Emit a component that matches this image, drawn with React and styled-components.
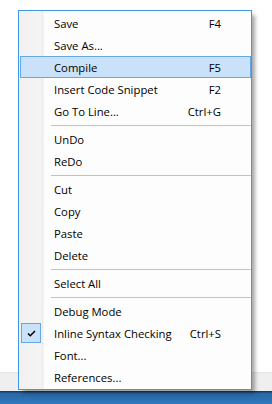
import React from "react";
import styled, { createGlobalStyle } from "styled-components";

const Global = createGlobalStyle`
  html, body { margin: 0; padding: 0; background: #ffffff; }
  body { font-family: "Segoe UI", "Open Sans", "Noto Sans", sans-serif; }
`;

const Desktop = styled.div`
  position: relative;
  width: 272px;
  height: 404px;
  display: flex;
  flex-direction: column;
  overflow: hidden;
`;

const WindowArea = styled.div`
  flex: 1;
  background: #ffffff;
`;

const StatusStrip = styled.div`
  height: 18px;
  background: #efefef;
  border-top: 1px solid #e4e4e4;
`;

const Taskbar = styled.div`
  height: 13px;
  background: linear-gradient(#173d63 0, #173d63 1px, #2667a6 2px, #2f78bb 100%);
`;

const Menu = styled.div`
  position: absolute;
  left: 18px;
  top: 10px;
  width: 232px;
  padding: 1px 0;
  border: 1px solid #3f97e8;
  background: linear-gradient(to right, #f1f1f1 0, #f4f4f4 22px, #ebebeb 24px, #fdfdfd 25px, #fdfdfd 100%);
  box-shadow: 4px 4px 4px -1px rgba(0, 0, 0, 0.35);
  display: flex;
  flex-direction: column;
  font-size: 11.3px;
  color: #000;
`;

const Row = styled.div`
  position: relative;
  height: 22px;
  display: flex;
  align-items: center;
  justify-content: space-between;
  padding: 0 30px 0 35px;
  box-sizing: border-box;
  ${(p) =>
    p.$active &&
    `
    margin: 0 0 0 1px;
    padding-left: 34px;
    background: #c9e2f9;
    box-shadow: inset 0 0 0 1px #66a7e8;
  `}
`;

const Label = styled.span`
  white-space: nowrap;
`;

const Shortcut = styled.span`
  white-space: nowrap;
  text-align: right;
`;

const CheckBox = styled.span`
  position: absolute;
  left: 2px;
  top: 1px;
  width: 18px;
  height: 18px;
  border: 1px solid #66a7e8;
  background: #c9e2f9;
  display: flex;
  align-items: center;
  justify-content: center;
`;

const Separator = styled.div`
  height: 6px;
  display: flex;
  align-items: center;
  padding-left: 32px;
  &::after {
    content: "";
    flex: 1;
    height: 1px;
    background: #c2c2c2;
  }
`;

const groups = [
  [
    { label: "Save", key: "F4" },
    { label: "Save As..." },
    { label: "Compile", key: "F5", active: true },
    { label: "Insert Code Snippet", key: "F2" },
    { label: "Go To Line...", key: "Ctrl+G" },
  ],
  [{ label: "UnDo" }, { label: "ReDo" }],
  [{ label: "Cut" }, { label: "Copy" }, { label: "Paste" }, { label: "Delete" }],
  [{ label: "Select All" }],
  [
    { label: "Debug Mode" },
    { label: "Inline Syntax Checking", key: "Ctrl+S", checked: true },
    { label: "Font..." },
    { label: "References..." },
  ],
];

const Check = () => (
  <svg width="9" height="7" viewBox="0 0 9 7">
    <path d="M1 3.5 L3.3 5.8 L8 1" fill="none" stroke="#000" strokeWidth="1.5" />
  </svg>
);

export default function App() {
  return (
    <>
      <Global />
      <Desktop>
        <WindowArea />
        <StatusStrip />
        <Taskbar />
        <Menu>
          {groups.map((g, gi) => (
            <React.Fragment key={gi}>
              {gi > 0 && <Separator />}
              {g.map((it) => (
                <Row key={it.label} $active={it.active}>
                  {it.checked && (
                    <CheckBox>
                      <Check />
                    </CheckBox>
                  )}
                  <Label>{it.label}</Label>
                  {it.key && <Shortcut>{it.key}</Shortcut>}
                </Row>
              ))}
            </React.Fragment>
          ))}
        </Menu>
      </Desktop>
    </>
  );
}
